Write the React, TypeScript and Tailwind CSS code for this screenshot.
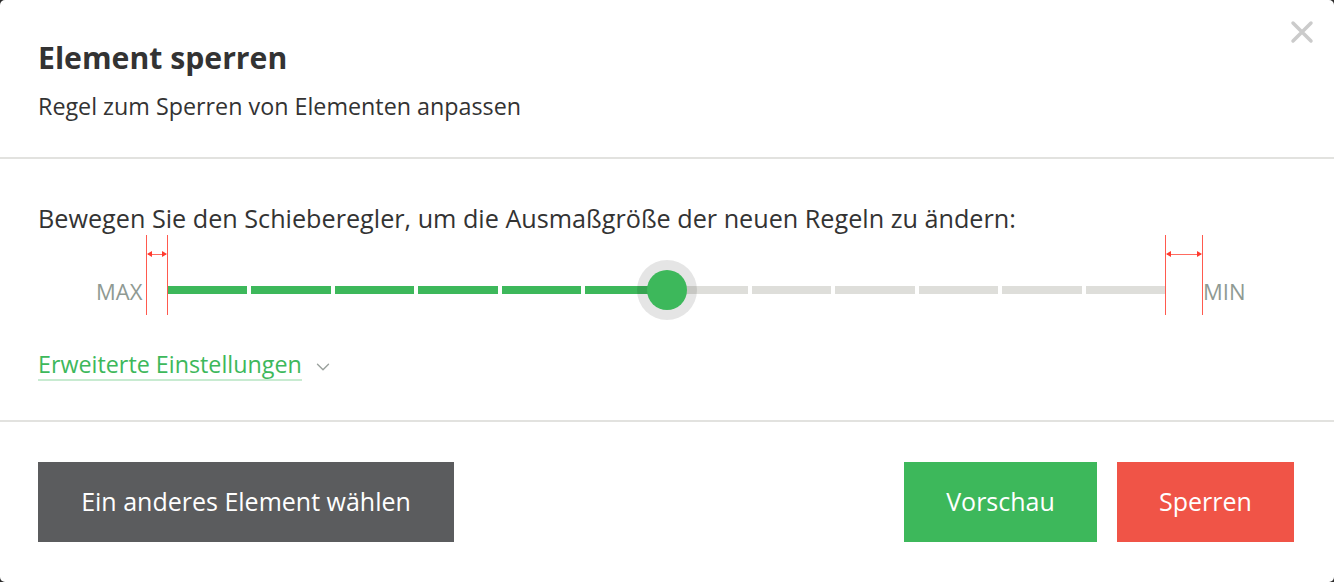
import { ChevronDown } from "lucide-react";

const green = "bg-[#3db85b]";

// 12 dashes, first half filled up to the handle
const segments = Array.from({ length: 12 }, (_, i) => i < 6);

function Marker() {
  return (
    <div className="relative h-full w-full">
      <span className="absolute left-0 top-0 h-full w-px bg-[#ff5a4e]" />
      <span className="absolute right-0 top-0 h-full w-px bg-[#ff5a4e]" />
      <span className="absolute left-[2px] right-[2px] top-[19px] h-px bg-[#ff6b60]" />
      <span className="absolute left-px top-[16px] h-0 w-0 border-y-[3px] border-r-[5px] border-y-transparent border-r-[#ff3b2f]" />
      <span className="absolute right-px top-[16px] h-0 w-0 border-y-[3px] border-l-[5px] border-y-transparent border-l-[#ff3b2f]" />
    </div>
  );
}

export default function App() {
  return (
    <div className="h-[582px] w-[1334px] bg-[#2b2b2b] font-['Open_Sans',sans-serif] text-[#333]">
      <div className="relative flex h-full flex-col rounded-[5px] bg-white">
        <button className="absolute right-[20px] top-[20px] h-[24px] w-[24px]" aria-label="Schließen">
          <svg viewBox="0 0 24 24" className="h-full w-full">
            <path d="M3 3 L21 21 M21 3 L3 21" stroke="#cbcbcb" strokeWidth="3.5" strokeLinecap="round" />
          </svg>
        </button>

        <header className="h-[159px] border-b-2 border-[#e2e2df] px-[38px] pt-[43px]">
          <h1 className="text-[30.2px] font-bold leading-none">Element sperren</h1>
          <p className="mt-[22px] text-[23.3px] leading-none">Regel zum Sperren von Elementen anpassen</p>
        </header>

        <section className="h-[263px] border-b-2 border-[#e2e2df] px-[38px] pt-[47px]">
          <p className="text-[25.2px] leading-none">
            Bewegen Sie den Schieberegler, um die Ausmaßgröße der neuen Regeln zu ändern:
          </p>

          <div className="mt-[4px] flex h-[80px] items-start pl-[58px]">
            <span className="w-[50px] pt-[45px] text-[22px] leading-none text-[#8f9a93]">MAX</span>
            <div className="w-[22px] self-stretch">
              <Marker />
            </div>
            <div className="relative mt-[51px] flex w-[997px] gap-[4px]">
              {segments.map((on, i) => (
                <span key={i} className={`h-[8px] flex-1 ${on ? green : "bg-[#dededa]"}`} />
              ))}
              <span className="absolute left-1/2 top-1/2 h-[60px] w-[60px] -translate-x-1/2 -translate-y-1/2 rounded-full bg-black/10" />
              <span className={`absolute left-1/2 top-1/2 h-[40px] w-[40px] -translate-x-1/2 -translate-y-1/2 rounded-full ${green}`} />
            </div>
            <div className="w-[38px] self-stretch">
              <Marker />
            </div>
            <span className="pt-[45px] text-[22px] leading-none text-[#8f9a93]">MIN</span>
          </div>

          <div className="mt-[38px] flex items-center gap-[10px]">
            <a className="border-b-2 border-[#c8ebd1] pb-[2px] text-[23.3px] leading-none text-[#3db85b]">
              Erweiterte Einstellungen
            </a>
            <ChevronDown className="h-[22px] w-[22px] text-[#9aa19d]" strokeWidth={1.5} />
          </div>
        </section>

        <footer className="flex items-start justify-between px-[38px] pr-[40px] pt-[40px]">
          <button className="h-[80px] w-[416px] bg-[#5b5c5e] text-[25px] text-white">
            Ein anderes Element wählen
          </button>
          <div className="flex gap-[20px]">
            <button className={`h-[80px] w-[193px] ${green} text-[25px] text-white`}>Vorschau</button>
            <button className="h-[80px] w-[177px] bg-[#f05447] text-[25px] text-white">Sperren</button>
          </div>
        </footer>
      </div>
    </div>
  );
}
